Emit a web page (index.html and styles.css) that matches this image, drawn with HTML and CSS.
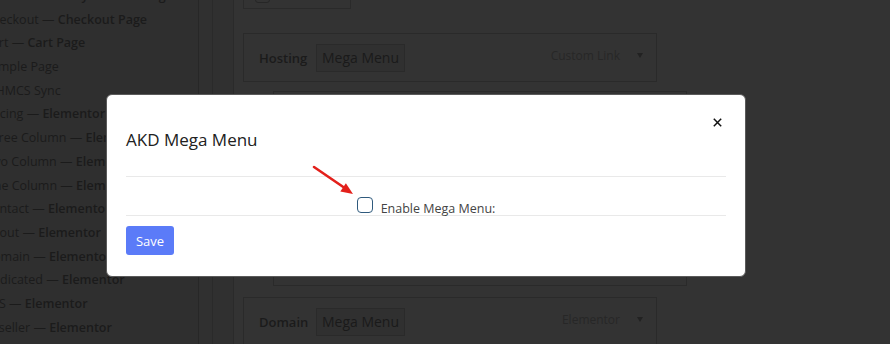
FILE: index.html
```html
<!DOCTYPE html>
<html>
<head>
<meta charset="utf-8">
<link rel="stylesheet" href="styles.css">
</head>
<body>
<div class="screen">
  <div class="sidebar">
    <ul class="pages">
      <li>My account — <b>My Account Page</b></li>
      <li>Checkout — <b>Checkout Page</b></li>
      <li>Cart — <b>Cart Page</b></li>
      <li>Sample Page</li>
      <li>WHMCS Sync</li>
      <li>Pricing — <b>Elementor</b></li>
      <li>Three Column — <b>Elementor</b></li>
      <li>Two Column — <b>Elementor</b></li>
      <li>One Column — <b>Elementor</b></li>
      <li>Contact — <b>Elementor</b></li>
      <li>About — <b>Elementor</b></li>
      <li>Domain — <b>Elementor</b></li>
      <li>Dedicated — <b>Elementor</b></li>
      <li>VPS — <b>Elementor</b></li>
      <li>Reseller — <b>Elementor</b></li>
    </ul>
  </div>
  <div class="strip strip-a"></div>
  <div class="strip strip-b"></div>
  <div class="main">
    <div class="item-top"><span class="mini-check"></span></div>
    <div class="item">
      <span class="item-title">Hosting</span>
      <span class="mega-box">Mega Menu</span>
      <span class="controls">Custom Link<i class="tri"></i></span>
    </div>
    <div class="item sub"></div>
    <div class="item domain">
      <span class="item-title">Domain</span>
      <span class="mega-box">Mega Menu</span>
      <span class="controls">Elementor<i class="tri"></i></span>
    </div>
  </div>

  <div class="modal">
    <div class="modal-header">
      <h2 class="modal-title">AKD Mega Menu</h2>
      <svg class="close" width="9" height="9" viewBox="0 0 9 9"><path d="M0.8 0.8 L8.2 8.2 M8.2 0.8 L0.8 8.2" stroke="#111" stroke-width="1.5" fill="none"/></svg>
    </div>
    <div class="modal-body">
      <span class="check"></span>
      <span class="check-label">Enable Mega Menu:</span>
    </div>
    <div class="modal-footer">
      <button class="save">Save</button>
    </div>
    <svg class="arrow" width="60" height="45" viewBox="0 0 60 45">
      <line x1="14" y1="12" x2="44" y2="32.5" stroke="#e3201b" stroke-width="2.6" stroke-linecap="round"/>
      <polygon points="53,39 40.3,36.6 45.9,28.2" fill="#e3201b"/>
    </svg>
  </div>
</div>
</body>
</html>
```
FILE: styles.css
```css
html, body {
  margin: 0;
  padding: 0;
}
body {
  width: 890px;
  height: 344px;
  overflow: hidden;
  background: #333333;
  font-family: "Open Sans", "Noto Sans", sans-serif;
}
.screen {
  position: relative;
  display: flex;
  height: 344px;
}
.sidebar {
  width: 198px;
  flex: none;
  overflow: hidden;
  background: #2f2f2f;
  border-right: 1px solid #272727;
}
.pages {
  list-style: none;
  margin: -16px 0 0 -16px;
  padding: 0;
  white-space: nowrap;
}
.pages li {
  height: 23.7px;
  line-height: 23.7px;
  font-size: 12.5px;
  color: #1b1b1b;
}
.pages b {
  font-weight: 600;
}
.strip {
  flex: none;
  background: #303030;
  border-right: 1px solid #2a2a2a;
}
.strip-a { width: 13px; }
.strip-b { width: 20px; }
.main {
  flex: 1;
  padding-left: 9px;
}
.item-top {
  width: 108px;
  height: 36px;
  margin-top: -27px;
  box-sizing: border-box;
  border: 1px solid #2a2a2a;
  padding: 14px 0 0 11px;
}
.mini-check {
  display: block;
  width: 15px;
  height: 15px;
  box-sizing: border-box;
  border: 1px solid #262626;
  border-radius: 3px;
}
.item {
  width: 414px;
  height: 49px;
  box-sizing: border-box;
  border: 1px solid #2a2a2a;
  margin-top: 24px;
  display: flex;
  align-items: center;
  padding: 0 13px 0 15px;
}
.item.sub {
  margin-left: 30px;
  margin-top: 9px;
  height: 195px;
}
.item.domain {
  margin-top: 11px;
}
.item-title {
  width: 57px;
  font-size: 13px;
  font-weight: 600;
  color: #1b1b1b;
}
.mega-box {
  width: 89px;
  height: 28px;
  box-sizing: border-box;
  border: 1px solid #2a2a2a;
  background: #303030;
  font-size: 14px;
  line-height: 26px;
  text-align: center;
  color: #1a1a1a;
}
.controls {
  margin-left: auto;
  margin-top: -5px;
  display: flex;
  align-items: center;
  font-size: 12px;
  color: #272727;
}
.tri {
  display: block;
  margin-left: 17px;
  width: 0;
  height: 0;
  border-left: 3.5px solid transparent;
  border-right: 3.5px solid transparent;
  border-top: 5px solid #222222;
}

/* modal */
.modal {
  position: absolute;
  left: 106px;
  top: 94px;
  width: 640px;
  height: 183px;
  box-sizing: border-box;
  background: #ffffff;
  border: 1px solid #5a5a5a;
  border-radius: 6px;
  padding: 16px 19px 0;
}
.modal-header {
  display: flex;
  align-items: flex-start;
  border-bottom: 1px solid #e9e9e9;
}
.modal-title {
  margin: 18px 0 25px;
  font-size: 17px;
  line-height: 22px;
  font-weight: 500;
  color: #212121;
}
.close {
  display: block;
  margin: 7px 4px 0 auto;
}
.modal-body {
  height: 39px;
  box-sizing: border-box;
  display: flex;
  justify-content: center;
  align-items: flex-start;
  padding-top: 20px;
  border-bottom: 1px solid #e9e9e9;
}
.check {
  width: 16px;
  height: 16px;
  box-sizing: border-box;
  border: 1.5px solid #2f5a7d;
  border-radius: 4px;
}
.check-label {
  margin: 4px 0 0 8px;
  font-size: 12.5px;
  line-height: 16px;
  color: #444444;
}
.modal-footer {
  padding-top: 10px;
}
.save {
  display: block;
  width: 48px;
  height: 29px;
  border: none;
  border-radius: 3px;
  background: #5b7bf8;
  color: #ffffff;
  font-family: "Open Sans", "Noto Sans", sans-serif;
  font-size: 13px;
  padding: 0;
}
.arrow {
  position: absolute;
  left: 193px;
  top: 60px;
}
```
